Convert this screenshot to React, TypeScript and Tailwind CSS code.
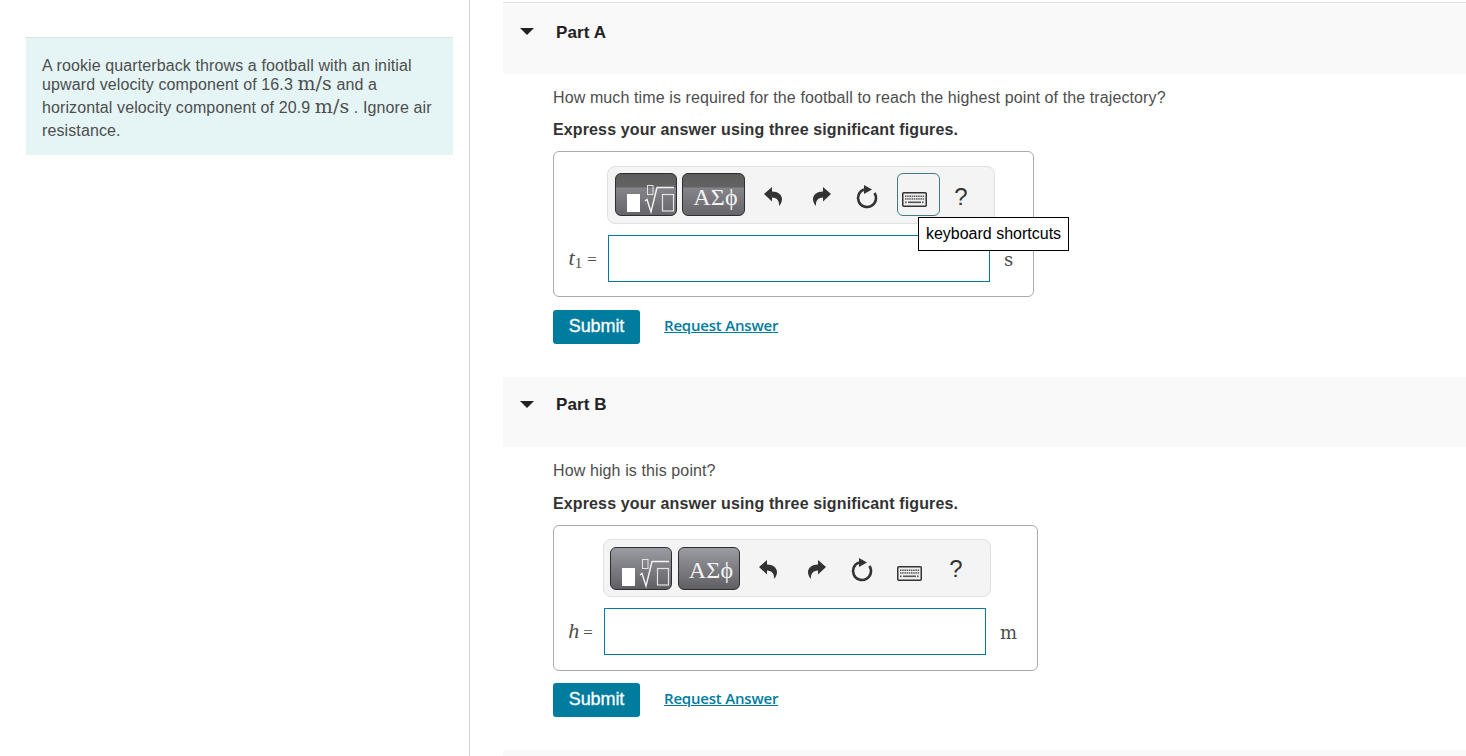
const sans = "font-['Liberation_Sans',Arial,sans-serif]";
const serif = "font-['Liberation_Serif','DejaVu_Serif',serif]";
const dejavu = "font-['DejaVu_Serif',serif]";

function SqrtGlyph() {
  return (
    <svg width="62" height="43" viewBox="0 0 62 43" fill="none" className="block">
      <rect x="12" y="21" width="13" height="18" fill="#fff" />
      <rect x="32.5" y="12.5" width="5.5" height="9" stroke="#e4e4e4" strokeWidth="1" />
      <path d="M30 28 L32 26.5 L36 39 L42 14.5 H59" stroke="#f4f4f4" strokeWidth="1.4" />
      <rect x="47.5" y="21.5" width="11" height="16.5" stroke="#e4e4e4" strokeWidth="1.2" />
    </svg>
  );
}

function UndoIcon({ flip }: { flip?: boolean }) {
  return (
    <svg width="18" height="19" viewBox="0 0 18 19" className={flip ? "-scale-x-100" : ""}>
      <path d="M0 7 L8 0 V4.5 C14 4.5 18 8 18 12 C18 15 16.5 17.5 15 19 C15.5 14 13 10.5 8 10.5 V14.5 Z" fill="#333" />
    </svg>
  );
}

function ResetIcon() {
  return (
    <svg width="26" height="26" viewBox="0 0 26 26" fill="none">
      <path d="M10 5.5 A9 9 0 1 0 20.5 9" stroke="#333" strokeWidth="2.6" />
      <path d="M10 1 L18 5.5 L10 10 Z" fill="#333" />
    </svg>
  );
}

function KeyboardIcon() {
  const row = (y: number) =>
    [0, 1, 2, 3, 4, 5, 6, 7, 8].map((i) => <rect key={`${y}-${i}`} x={3 + i * 2.2} y={y} width="1.5" height="1.5" fill="#555" />);
  return (
    <svg width="25" height="15" viewBox="0 0 25 15">
      <rect x="0.75" y="0.75" width="23.5" height="13.5" rx="1" fill="#f0f0f0" stroke="#333" strokeWidth="1.5" />
      {row(3.5)}
      {row(6.2)}
      <rect x="3" y="9.5" width="1.6" height="1.6" fill="#555" />
      <rect x="6" y="9.5" width="13" height="1.6" fill="#555" />
      <rect x="20" y="9.5" width="1.6" height="1.6" fill="#555" />
    </svg>
  );
}

function Toolbar({ hover }: { hover: boolean }) {
  const btn = hover
    ? "bg-[linear-gradient(#5c5c5c_0,#636363_13px,#858589_14px,#66666a_100%)] mb-px"
    : "bg-[linear-gradient(#9b9ba3,#5f5f63)]";
  return (
    <div className={`flex h-[58px] w-[388px] items-center rounded-[8px] border border-[#e0e0e0] bg-[#f4f4f4] ${hover ? "pl-[7px]" : "pl-[6px]"}`}>
      <div className={`h-[43px] w-[62px] rounded-[6px] border border-[#2e2e2e] ${btn}`}>
        <div className="-m-px">
          <SqrtGlyph />
        </div>
      </div>
      <div
        className={`flex h-[43px] items-center justify-center rounded-[6px] border border-[#2e2e2e] pl-[4px] text-[24px] text-[#f2f2f2] ${
          hover ? "ml-[5px] w-[63px] pt-[5px]" : "ml-[6px] w-[62px] pt-[3px]"
        } ${serif} ${btn}`}
      >
        ΑΣϕ
      </div>
      <div className="mt-[3px] flex w-[56px] justify-center">
        <UndoIcon />
      </div>
      <div className="mt-[3px] flex w-[42px] justify-center">
        <UndoIcon flip />
      </div>
      <div className="mt-[4px] flex w-[48px] justify-center">
        <ResetIcon />
      </div>
      <div
        className={`ml-[6px] flex h-[43px] w-[43px] items-center justify-start rounded-[6px] border pl-[4px] pt-[10px] ${
          hover ? "mb-px border-[#3f7a86]" : "border-transparent"
        }`}
      >
        <KeyboardIcon />
      </div>
      <div className={`ml-px flex w-[40px] justify-center text-[24px] text-[#333] ${hover ? "mt-[3px]" : "mt-[2px]"} ${sans}`}>?</div>
    </div>
  );
}

function Header({ label, top }: { label: string; top: string }) {
  return (
    <div className="flex h-[70px] bg-[#f9f9f9]">
      <div className="ml-[17px] mt-[24px] h-0 w-0 border-x-[7px] border-t-[7px] border-x-transparent border-t-[#222]" />
      <div className={`ml-[22px] text-[17px] font-bold leading-[20px] text-[#222] ${top}`}>{label}</div>
    </div>
  );
}

function Actions({ top }: { top: string }) {
  return (
    <div className={`flex items-center ${top}`}>
      <div className={`flex h-[34px] w-[87px] items-center justify-center rounded-[3px] bg-[#007c9e] pb-[2px] text-[18px] tracking-[-0.1px] text-white [-webkit-text-stroke:0.3px_white] ${sans}`}>
        Submit
      </div>
      <a className="mb-[4px] ml-[24px] text-[15px] font-semibold text-[#007c9e] underline font-['Open_Sans',sans-serif] tracking-[-0.2px]">
        Request Answer
      </a>
    </div>
  );
}

function MS() {
  return <span className={`text-[19px] leading-none ${dejavu}`}>m/s</span>;
}

export default function App() {
  return (
    <div className={`flex h-[756px] w-full overflow-hidden bg-white text-[16px] tracking-[0.11px] text-[#4d4d4d] ${sans}`}>
      <div className="w-[470px] shrink-0 border-r border-[#cfd4da] pl-[26px] pr-[16px] pt-[37px]">
        <div className="h-[118px] border-t border-[#d8e4e8] bg-[#e5f5f6] pl-[16px] pt-[18px]">
          <div className="leading-[20px]">A rookie quarterback throws a football with an initial</div>
          <div className="-mt-[2px] leading-[20px]">
            upward velocity component of 16.3 <MS /> and a
          </div>
          <div className="mt-[2px] leading-[20px]">
            horizontal velocity component of 20.9 <MS /> . Ignore air
          </div>
          <div className="mt-[3px] leading-[20px]">resistance.</div>
        </div>
      </div>

      <div className="min-w-0 flex-1 pl-[33px] pt-[2px]">
        <div className="border-t border-[#e2e2e2]">
          <div className="h-[1px] bg-[#f9f9f9]" />
          <Header label="Part A" top="mt-[19px]" />
        </div>
        <div className="pl-[50px]">
          <div className="mt-[14px] leading-[20px]">How much time is required for the football to reach the highest point of the trajectory?</div>
          <div className="mt-[12px] font-bold leading-[20px] tracking-[0.13px] text-[#333]">Express your answer using three significant figures.</div>
          <div className="relative mt-[11px] h-[146px] w-[481px] rounded-[6px] border border-[#aaa] pt-[14px]">
            <div className="ml-[53px]">
              <Toolbar hover />
            </div>
            <div className="mt-[11px] flex items-center">
              <div className={`flex w-[54px] items-baseline justify-end pr-[11px] pt-px text-[22px] leading-[24px] ${serif}`}>
                <i>t</i>
                <span className="relative top-[3px] text-[15px]">1</span>
                <span className="ml-[5px] text-[17px]">=</span>
              </div>
              <div className="h-[47px] w-[382px] border border-[#007c9e] bg-white" />
              <div className={`ml-[14px] mt-[2px] text-[18px] ${dejavu}`}>s</div>
            </div>
            <div className="absolute left-[364px] top-[65px] flex h-[34px] w-[151px] items-center justify-center border border-black bg-white text-[16px] tracking-normal text-black">
              keyboard shortcuts
            </div>
          </div>
          <Actions top="mt-[13px]" />
        </div>

        <div className="mt-[33px]">
          <Header label="Part B" top="mt-[18px]" />
        </div>
        <div className="pl-[50px]">
          <div className="mt-[14px] leading-[20px]">How high is this point?</div>
          <div className="mt-[13px] font-bold leading-[20px] tracking-[0.13px] text-[#333]">Express your answer using three significant figures.</div>
          <div className="mt-[11px] h-[146px] w-[485px] rounded-[6px] border border-[#aaa] pt-[13px]">
            <div className="ml-[49px]">
              <Toolbar hover={false} />
            </div>
            <div className="mt-[11px] flex items-center">
              <div className={`flex w-[50px] items-baseline justify-end pr-[11px] text-[22px] leading-[24px] ${serif}`}>
                <i>h</i>
                <span className="ml-[4px] text-[17px]">=</span>
              </div>
              <div className="h-[47px] w-[382px] border border-[#007c9e] bg-white" />
              <div className={`ml-[14px] mt-[2px] text-[18px] ${dejavu}`}>m</div>
            </div>
          </div>
          <Actions top="mt-[12px]" />
        </div>
        <div className="mt-[33px] h-[30px] bg-[#f9f9f9]" />
      </div>
    </div>
  );
}
